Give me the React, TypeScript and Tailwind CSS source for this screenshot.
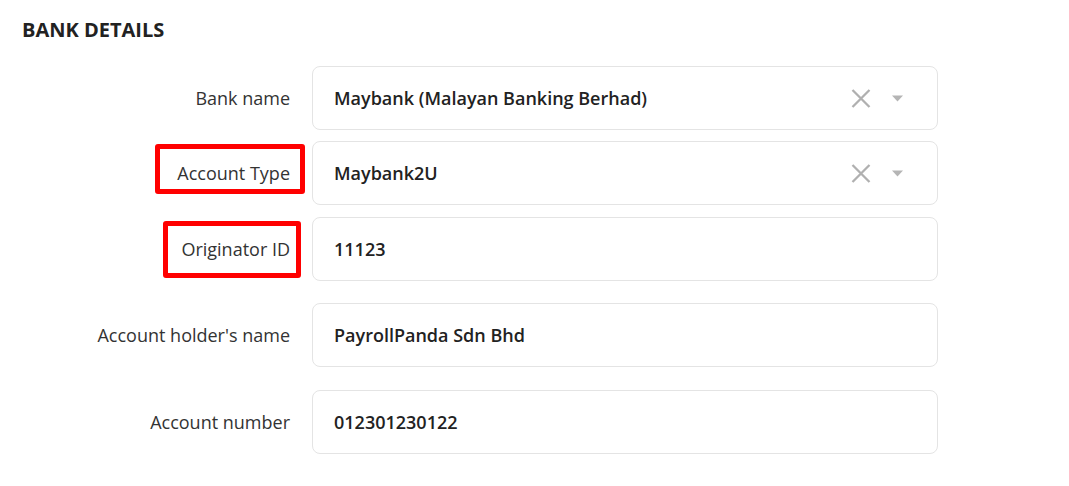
import React from "react";

function Caret() {
  return (
    <svg width="11" height="7" viewBox="0 0 11 7" className="block">
      <path d="M0 0.5 L11 0.5 L5.5 6.5 Z" fill="#b5b5b5" />
    </svg>
  );
}

function Cross() {
  return (
    <svg width="20" height="19" viewBox="0 0 20 19" className="block">
      <path d="M1.5 1 L18.5 18 M18.5 1 L1.5 18" stroke="#b0b0b0" strokeWidth="2.3" strokeLinecap="butt" />
    </svg>
  );
}

function Row({
  label,
  value,
  select,
  mt,
  box,
}: {
  label: string;
  value: string;
  select?: boolean;
  mt: string;
  box?: string;
}) {
  return (
    <div className={`flex items-center ${mt}`}>
      <div className="relative w-[290px] shrink-0 text-right text-[18px] text-[#333333] leading-[24px]">
        {label}
        {box && <div className={`absolute border-[5px] border-[#ff0000] rounded-[3px] ${box}`} />}
      </div>
      <div className="ml-[22px] w-[626px] h-[64px] border border-[#e4e4e4] rounded-[8px] bg-white flex items-center pl-[21px] pr-[34px]">
        <span className="flex-1 text-[18px] font-semibold text-[#222222]">{value}</span>
        {select && (
          <div className="flex items-center gap-[21px]">
            <Cross />
            <Caret />
          </div>
        )}
      </div>
    </div>
  );
}

export default function App() {
  return (
    <div className="w-[1069px] h-[486px] bg-white pt-[16px]" style={{ fontFamily: "'Open Sans', 'Noto Sans', sans-serif" }}>
      <div className="pl-[22px] text-[20px] font-bold text-[#222222] leading-[28px]">BANK DETAILS</div>
      <div className="flex flex-col">
        <Row label="Bank name" value="Maybank (Malayan Banking Berhad)" select mt="mt-[22px]" />
        <Row
          label="Account Type"
          value="Maybank2U"
          select
          mt="mt-[11px]"
          box="left-[155px] right-[-15px] top-[-17px] bottom-[-9px]"
        />
        <Row
          label="Originator ID"
          value="11123"
          mt="mt-[12px]"
          box="left-[163px] right-[-11px] top-[-16px] bottom-[-17px]"
        />
        <Row label="Account holder's name" value="PayrollPanda Sdn Bhd" mt="mt-[22px]" />
        <Row label="Account number" value="012301230122" mt="mt-[23px]" />
      </div>
    </div>
  );
}
